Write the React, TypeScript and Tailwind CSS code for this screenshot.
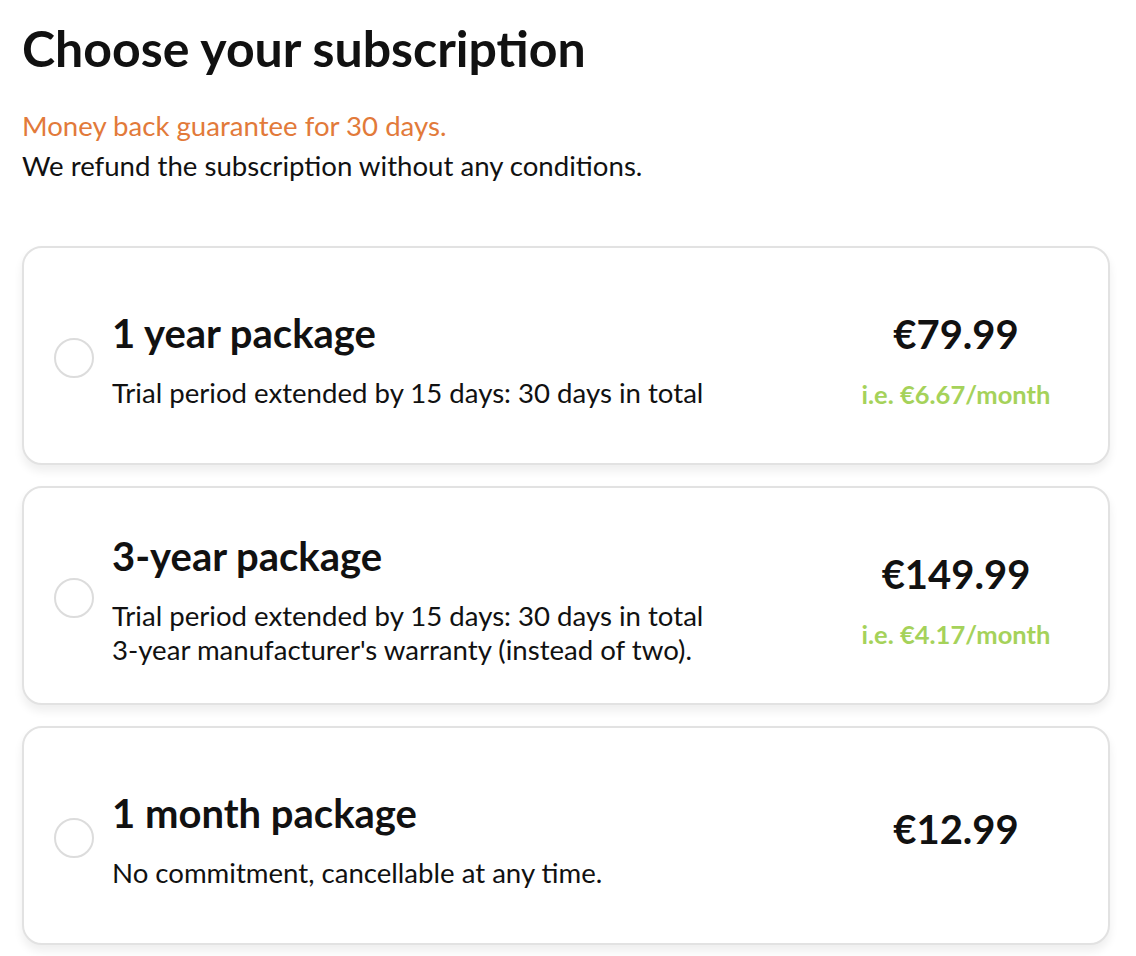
import { ReactNode } from "react";

interface Plan {
  id: string;
  title: string;
  lines: string[];
  price: string;
  perMonth?: string;
}

const plans: Plan[] = [
  {
    id: "1y",
    title: "1 year package",
    lines: ["Trial period extended by 15 days: 30 days in total"],
    price: "€79.99",
    perMonth: "i.e. €6.67/month",
  },
  {
    id: "3y",
    title: "3-year package",
    lines: [
      "Trial period extended by 15 days: 30 days in total",
      "3-year manufacturer's warranty (instead of two).",
    ],
    price: "€149.99",
    perMonth: "i.e. €4.17/month",
  },
  {
    id: "1m",
    title: "1 month package",
    lines: ["No commitment, cancellable at any time."],
    price: "€12.99",
  },
];

function Card({ children }: { children: ReactNode }) {
  return (
    <label className="flex h-[219px] w-[1088px] cursor-pointer items-center rounded-[20px] border-2 border-[#e2e2e2] bg-white shadow-[0_6px_10px_rgba(0,0,0,0.07)]">
      {children}
    </label>
  );
}

function PlanCard({ plan }: { plan: Plan }) {
  return (
    <Card>
      {/* radio */}
      <div className="ml-[30px] mr-[18px] mt-[4px] h-[40px] w-[40px] shrink-0 rounded-full border-2 border-[#dcdcdc] bg-white" />
      <div className="flex-1 pt-[8px]">
        <h2 className="mb-[19px] text-[40px] font-bold leading-[48px] text-[#111]">{plan.title}</h2>
        {plan.lines.map((l) => (
          <p key={l} className="text-[27.6px] leading-[34px] text-[#111]">
            {l}
          </p>
        ))}
      </div>
      <div className={"mr-[52px] flex w-[200px] flex-col items-center " + (plan.perMonth ? "pt-[8px]" : "mb-[14px]")}>
        <div className="text-[40px] font-bold leading-[48px] text-[#111]">{plan.price}</div>
        {plan.perMonth && (
          <div className="mt-[20px] text-[25.5px] font-bold leading-[32px] text-[#a5d25a]">{plan.perMonth}</div>
        )}
      </div>
    </Card>
  );
}

export default function App() {
  return (
    <div className="min-h-screen bg-white px-[22px] pt-[18px] font-['Lato','Noto_Sans',sans-serif] text-[#111]">
      <h1 className="text-[50px] font-bold leading-[60px]">Choose your subscription</h1>
      <div className="mt-[28px] text-[27.6px] leading-[40px]">
        <p className="text-[#e27a3a]">Money back guarantee for 30 days.</p>
        <p>We refund the subscription without any conditions.</p>
      </div>
      <div className="mt-[60px] flex flex-col gap-[21px]">
        {plans.map((p) => (
          <PlanCard key={p.id} plan={p} />
        ))}
      </div>
    </div>
  );
}
